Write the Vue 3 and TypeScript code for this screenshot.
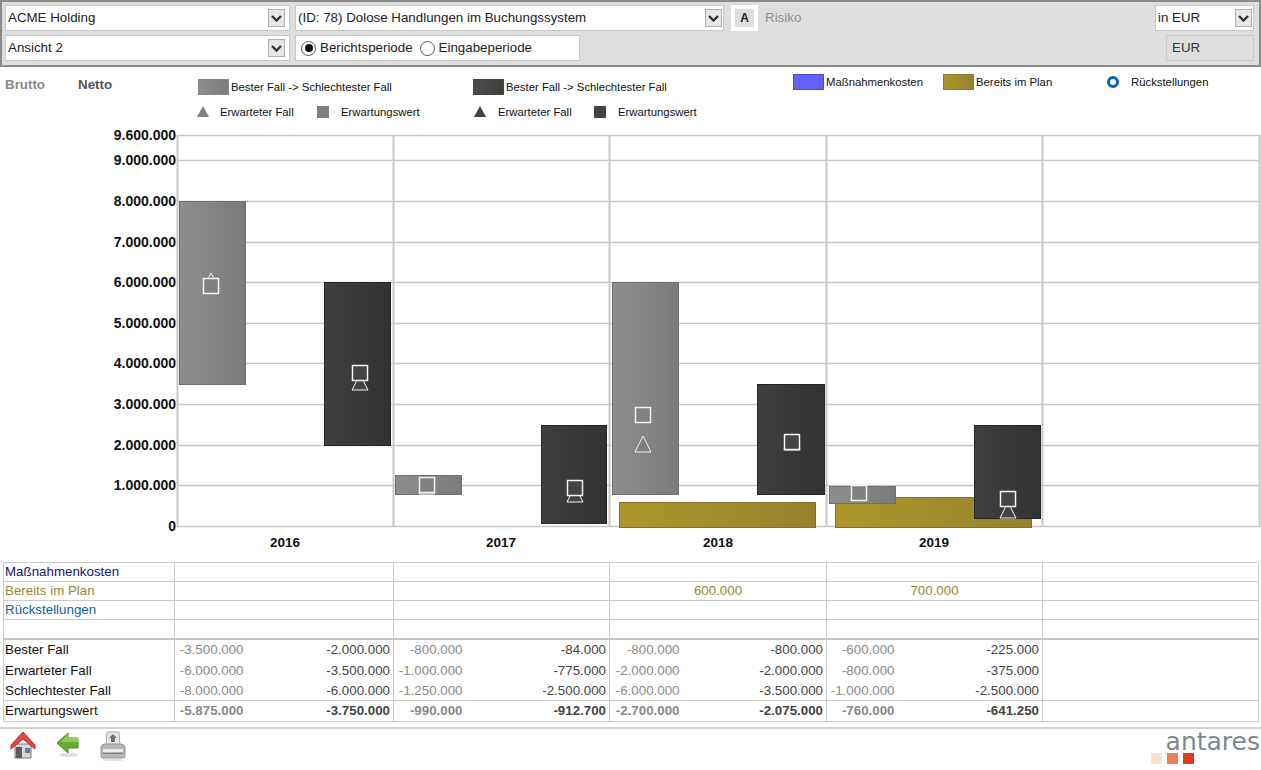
<script setup lang="ts">
interface Bar { x: number; y: number; w: number; h: number; kind: string }
interface Mark { x: number; y: number; dark: boolean }

const yTicks = [
  { v: '9.600.000', y: 135 }, { v: '9.000.000', y: 160 }, { v: '8.000.000', y: 201 },
  { v: '7.000.000', y: 242 }, { v: '6.000.000', y: 282 }, { v: '5.000.000', y: 323 },
  { v: '4.000.000', y: 363 }, { v: '3.000.000', y: 404 }, { v: '2.000.000', y: 445 },
  { v: '1.000.000', y: 485 }, { v: '0', y: 526 },
]
const xLines = [177, 393, 609, 826, 1042, 1259]
const years = [{ t: '2016', x: 285 }, { t: '2017', x: 501 }, { t: '2018', x: 718 }, { t: '2019', x: 934 }]

const bars: Bar[] = [
  { x: 619, y: 502, w: 197, h: 25, kind: 'gold' },
  { x: 835, y: 497, w: 197, h: 30, kind: 'gold' },
  { x: 179, y: 201, w: 67, h: 183, kind: 'gray' },
  { x: 324, y: 282, w: 67, h: 163, kind: 'dark' },
  { x: 395, y: 475, w: 67, h: 19, kind: 'gray' },
  { x: 541, y: 425, w: 66, h: 98, kind: 'dark' },
  { x: 612, y: 282, w: 67, h: 212, kind: 'gray' },
  { x: 757, y: 384, w: 68, h: 110, kind: 'dark' },
  { x: 829, y: 486, w: 67, h: 17, kind: 'gray' },
  { x: 974, y: 425, w: 67, h: 93, kind: 'dark' },
]
const triangles: Mark[] = [
  { x: 211, y: 273, dark: false }, { x: 360, y: 374, dark: true },
  { x: 427, y: 478, dark: false }, { x: 575, y: 486, dark: true },
  { x: 643, y: 436, dark: false }, { x: 792, y: 434, dark: true },
  { x: 859, y: 484, dark: false }, { x: 1008, y: 502, dark: true },
]
const squares: Mark[] = [
  { x: 211, y: 286, dark: false }, { x: 360, y: 373, dark: true },
  { x: 427, y: 485, dark: false }, { x: 575, y: 488, dark: true },
  { x: 643, y: 415, dark: false }, { x: 792, y: 442, dark: true },
  { x: 859, y: 493, dark: false }, { x: 1008, y: 499, dark: true },
]
const triPoints = (m: Mark) => `${m.x},${m.y} ${m.x + 8},${m.y + 16} ${m.x - 8},${m.y + 16}`

const topRows = [
  { label: 'Maßnahmenkosten', cls: 'navy', vals: ['', '', '', '', ''] },
  { label: 'Bereits im Plan', cls: 'olive', vals: ['', '', '600.000', '700.000', ''] },
  { label: 'Rückstellungen', cls: 'blue', vals: ['', '', '', '', ''] },
  { label: '', cls: '', vals: ['', '', '', '', ''] },
]
const rows = [
  { label: 'Bester Fall', vals: ['-3.500.000', '-2.000.000', '-800.000', '-84.000', '-800.000', '-800.000', '-600.000', '-225.000'] },
  { label: 'Erwarteter Fall', vals: ['-6.000.000', '-3.500.000', '-1.000.000', '-775.000', '-2.000.000', '-2.000.000', '-800.000', '-375.000'] },
  { label: 'Schlechtester Fall', vals: ['-8.000.000', '-6.000.000', '-1.250.000', '-2.500.000', '-6.000.000', '-3.500.000', '-1.000.000', '-2.500.000'] },
]
const totals = ['-5.875.000', '-3.750.000', '-990.000', '-912.700', '-2.700.000', '-2.075.000', '-760.000', '-641.250']
const cols = [171, 72, 147, 72, 144, 73, 144, 71, 145, 216]
</script>

<template>
  <div class="page">
    <header class="toolbar">
      <div class="tb-row">
        <div class="sel w285"><span>ACME Holding</span><i class="arrow"><svg width="11" height="7" viewBox="0 0 11 7"><path d="M1 1 L5.500 5.500 L10 1" fill="none" stroke="#333" stroke-width="2.400" /></svg></i></div>
        <div class="sel w429"><span>(ID: 78) Dolose Handlungen im Buchungssystem</span><i class="arrow"><svg width="11" height="7" viewBox="0 0 11 7"><path d="M1 1 L5.500 5.500 L10 1" fill="none" stroke="#333" stroke-width="2.400" /></svg></i></div>
        <div class="a-box">A</div>
        <div class="risk">Risiko</div>
        <div class="sel w99"><span>in EUR</span><i class="arrow"><svg width="11" height="7" viewBox="0 0 11 7"><path d="M1 1 L5.500 5.500 L10 1" fill="none" stroke="#333" stroke-width="2.400" /></svg></i></div>
      </div>
      <div class="tb-row second">
        <div class="sel w285"><span>Ansicht 2</span><i class="arrow"><svg width="11" height="7" viewBox="0 0 11 7"><path d="M1 1 L5.500 5.500 L10 1" fill="none" stroke="#333" stroke-width="2.400" /></svg></i></div>
        <div class="radios">
          <i class="radio on"></i><span>Berichtsperiode</span>
          <i class="radio"></i><span>Eingabeperiode</span>
        </div>
        <div class="cur">EUR</div>
      </div>
    </header>

    <section class="legend">
      <div class="tabs"><b class="brutto">Brutto</b><b class="netto">Netto</b></div>
      <div class="lg-block">
        <div class="lg-top"><i class="sw sw-gray"></i><span>Bester Fall -&gt; Schlechtester Fall</span></div>
        <div class="lg-bottom">
          <svg class="tri" width="12" height="11" viewBox="0 0 12 11"><path d="M6 0 L12 11 H0 Z" fill="#808080" /></svg><span class="t1">Erwarteter Fall</span>
          <i class="sq sq-gray"></i><span>Erwartungswert</span>
        </div>
      </div>
      <div class="lg-block second">
        <div class="lg-top"><i class="sw sw-dark"></i><span>Bester Fall -&gt; Schlechtester Fall</span></div>
        <div class="lg-bottom">
          <svg class="tri" width="12" height="11" viewBox="0 0 12 11"><path d="M6 0 L12 11 H0 Z" fill="#404040" /></svg><span class="t1">Erwarteter Fall</span>
          <i class="sq sq-dark"></i><span>Erwartungswert</span>
        </div>
      </div>
      <div class="lg-right">
        <i class="sw sw-blue"></i><span class="lt1">Maßnahmenkosten</span>
        <i class="sw sw-gold"></i><span class="lt2">Bereits im Plan</span>
        <i class="ring"></i><span>Rückstellungen</span>
      </div>
    </section>

    <svg class="chart" width="1261" height="437" viewBox="0 125 1261 437">
      <defs>
        <linearGradient id="g-gray"><stop offset="0" stop-color="#8e8e8e" /><stop offset="1" stop-color="#7b7b7b" /></linearGradient>
        <linearGradient id="g-dark"><stop offset="0" stop-color="#3f3f3f" /><stop offset="1" stop-color="#323232" /></linearGradient>
        <linearGradient id="g-gold"><stop offset="0" stop-color="#ae962c" /><stop offset="1" stop-color="#97812c" /></linearGradient>
      </defs>
      <line v-for="t in yTicks" :key="t.v" :x1="177" :x2="1259" :y1="t.y + 0.5" :y2="t.y + 0.5" class="grid h" />
      <line v-for="x in xLines" :key="x" :x1="x + 0.5" :x2="x + 0.5" y1="135" y2="527" class="grid v" />
      <text v-for="t in yTicks" :key="'l' + t.v" x="176" :y="t.y + 5" class="ylab">{{ t.v }}</text>
      <text v-for="y in years" :key="y.t" :x="y.x" y="547" class="year">{{ y.t }}</text>
      <rect v-for="(b, i) in bars" :key="i" :x="b.x + 0.5" :y="b.y + 0.5" :width="b.w - 1" :height="b.h" :class="['bar', b.kind]" :fill="`url(#g-${b.kind})`" />
      <polygon v-for="(m, i) in triangles" :key="'t' + i" :points="triPoints(m)" :fill="m.dark ? '#444' : '#808080'" class="marker thin" />
      <rect v-for="(m, i) in squares" :key="'s' + i" :x="m.x - 7.5" :y="m.y - 7.5" width="15" height="15" :fill="m.dark ? '#444' : '#808080'" class="marker" />
    </svg>

    <table class="data">
      <colgroup><col v-for="(w, i) in cols" :key="i" :style="{ width: w + 'px' }" /></colgroup>
      <tbody>
        <tr v-for="r in topRows" :key="r.label" class="top-row">
          <td :class="['label', r.cls]">{{ r.label }}</td>
          <td v-for="(v, i) in r.vals.slice(0, 4)" :key="i" colspan="2" class="center olive">{{ v }}</td>
          <td></td>
        </tr>
        <tr v-for="(r, ri) in rows" :key="r.label" :class="['val-row', 'r' + ri]">
          <td class="label">{{ r.label }}</td>
          <template v-for="(v, i) in r.vals" :key="i">
            <td :class="i % 2 ? 'right' : 'left'">{{ v }}</td>
          </template>
          <td></td>
        </tr>
        <tr class="total">
          <td class="label">Erwartungswert</td>
          <template v-for="(v, i) in totals" :key="i">
            <td :class="i % 2 ? 'right' : 'left'">{{ v }}</td>
          </template>
          <td></td>
        </tr>
      </tbody>
    </table>

    <footer class="foot">
      <div class="icons">
        <svg width="26" height="28" viewBox="0 0 26 28">
          <path d="M5 13 H21 V27 H5 Z" fill="#d8d8d8" stroke="#777" />
          <path d="M6 16 H12 V27 H6 Z" fill="#5c5c5c" />
          <path d="M15 17 H20 V22 H15 Z" fill="#5f7fa8" />
          <path d="M1 14 L13 1 L25 14 L25 18 L13 8 L1 18 Z" fill="#e2474b" stroke="#b62b2f" stroke-width="1" />
        </svg>
        <svg width="24" height="26" viewBox="0 0 24 26">
          <ellipse cx="13" cy="24" rx="9" ry="2" fill="#ddd" />
          <path d="M1 12 L12 2 V7 H22 V17 H12 V22 Z" fill="#68ad2e" stroke="#4f8e20" />
          <path d="M12 3 V7 H22 V11 H5 Z" fill="#93cc55" />
        </svg>
        <svg width="26" height="30" viewBox="0 0 26 30">
          <path d="M7 1 H19 L20 15 H6 Z" fill="#e4e6e8" stroke="#a8a8a8" />
          <path d="M13 3 L17 7 H15 V11 H11 V7 H9 Z" fill="#707070" />
          <path d="M1 17 Q1 13 5 13 H21 Q25 13 25 17 V25 Q25 27 23 27 H3 Q1 27 1 25 Z" fill="#b4b8bb" stroke="#94989c" />
          <path d="M3 18 H23 V21 H3 Z" fill="#ececec" />
          <path d="M3 22 H23 V23 H3 Z" fill="#777" />
          <ellipse cx="13" cy="29" rx="10" ry="1" fill="#ddd" />
        </svg>
      </div>
      <div class="logo">
        <div class="logo-text">antares</div>
        <div class="logo-sq"><i class="s1"></i><i class="s2"></i><i class="s3"></i></div>
      </div>
    </footer>
  </div>
</template>

<style scoped>
.page { width: 1261px; height: 770px; overflow: hidden; font-family: "Liberation Sans", Arial, sans-serif; color: #000; background: #fff; }
.toolbar { height: 67px; box-sizing: border-box; background: #dedede; border: 2px solid #8a8a8a; padding: 3px 5px 0 3px; }
.tb-row { display: flex; align-items: flex-start; height: 26px; }
.tb-row.second { margin-top: 4px; height: 26px; }
.sel { height: 26px; box-sizing: border-box; background: #fff; border: 1px solid #c9c9c9; display: flex; align-items: center; justify-content: space-between; padding: 0 1px 0 2px; font-size: 13.33px; color: #222; }
.sel span { position: relative; top: -1px; }
.w285 { width: 285px; margin-right: 5px; padding-right: 4px; }
.w429 { width: 429px; margin-right: 7px; }
.w99 { width: 99px; margin-left: auto; }
.arrow { width: 17px; height: 18px; box-sizing: border-box; border: 1px solid #b0b0b0; background: #e6e6e6; display: flex; align-items: center; justify-content: center; }
.a-box { width: 27px; height: 26px; box-sizing: border-box; border: 4px solid #fff; background: #dedede; font-size: 12px; font-weight: bold; display: flex; align-items: center; justify-content: center; color: #222; }
.risk { margin-left: 7px; line-height: 25px; font-size: 13.33px; color: #8f8f8f; }
.radios { width: 285px; height: 26px; box-sizing: border-box; background: #fff; border: 1px solid #c9c9c9; display: flex; align-items: center; padding-left: 5px; font-size: 13.33px; color: #222; }
.radios span { position: relative; top: -1px; }
.radio { width: 15px; height: 15px; box-sizing: border-box; border: 1px solid #555; border-radius: 50%; background: #fff; margin-right: 4px; position: relative; }
.radio + span { margin-right: 7px; }
.radio.on::after { content: ""; position: absolute; left: 2.500px; top: 2.500px; width: 8px; height: 8px; border-radius: 50%; background: #111; }
.cur { width: 88px; height: 26px; box-sizing: border-box; margin-left: auto; background: #dedede; border: 1px solid #c9c9c9; padding-left: 5px; line-height: 24px; font-size: 13.33px; color: #333; }

.legend { height: 58px; display: flex; font-size: 11.33px; color: #111; position: relative; }
.tabs { width: 198px; box-sizing: border-box; padding: 10px 0 0 5px; font-size: 13.33px; }
.brutto { color: #8a8a8a; display: inline-block; width: 73px; }
.netto { color: #555; }
.lg-block { width: 275px; padding-top: 11px; }
.lg-block.second { width: 320px; }
.lg-block.second .tri { margin-left: 1px; margin-right: 12px; }
.lg-block.second .t1 { width: 96px; }
.lg-top { display: flex; align-items: center; height: 17px; gap: 2px; }
.lg-bottom { display: flex; align-items: center; height: 15px; margin-top: 9px; }
.tri { margin-left: -1px; margin-right: 11px; }
.t1 { width: 97px; }
.sq { width: 12px; height: 12px; margin-right: 12px; }
.sq-gray { background: #808080; }
.sq-dark { background: #444; }
.sw { width: 31px; height: 16px; box-sizing: border-box; display: block; flex: none; }
.sw-gray { background: linear-gradient(90deg, #8e8e8e, #7b7b7b); border: 1px solid #888; }
.sw-dark { background: linear-gradient(90deg, #4c4c4c, #3e3e3e); border: 1px solid #444; }
.sw-blue { background: #6262f8; border: 1px solid #4a4ad8; }
.sw-gold { background: linear-gradient(90deg, #ae962c, #97812c); border: 1px solid #8d7a2a; }
.lg-right { display: flex; align-items: center; height: 17px; padding-top: 6px; gap: 2px; }
.lt1 { width: 115px; }
.lt2 { width: 129px; }
.ring { width: 12px; height: 12px; box-sizing: border-box; border: 3px solid #0b64ad; border-radius: 50%; margin-right: 10px; }

.chart { display: block; }
.grid { stroke: #c8c8c8; }
.grid.h { stroke-width: 1.4; }
.grid.v { stroke-width: 2; }
.ylab { font-size: 14px; font-weight: bold; text-anchor: end; fill: #111; }
.year { font-size: 13.5px; font-weight: bold; text-anchor: middle; fill: #111; }
.bar.gray { stroke: #6f6f6f; }
.bar.dark { stroke: #262626; }
.bar.gold { stroke: #85722a; }
.marker { stroke: #f2f2f2; stroke-width: 1.5; }
.marker.thin { stroke-width: 1; }

.data { margin-left: 3px; width: 1255px; table-layout: fixed; border-collapse: collapse; font-size: 13.33px; }
.data td { border: 1px solid #cbcbcb; padding: 0 3px; box-sizing: border-box; overflow: hidden; white-space: nowrap; }
.top-row td { height: 19px; line-height: 17px; vertical-align: top; }
.label { padding-left: 1px !important; color: #111; }
.navy { color: #14146e; }
.data .olive { color: #998534; }
.data .label.blue { color: #0a64ad; }
.center { text-align: center; }
.val-row td { height: 21px; line-height: 19px; border-top: none; border-bottom: none; }
.val-row.r0 td { border-top: 2px solid #c4c4c4; }
.val-row.r2 td { height: 20px; vertical-align: bottom; }
.left, .right { text-align: right; }
.data td.left { border-right: none; color: #8a8a8a; }
.data td.right { border-left: none; color: #444; }
.total td { height: 21px; line-height: 19px; font-weight: bold; vertical-align: top; }
.total .label { font-weight: normal; }

.foot { margin-top: 5px; border-top: 2px solid #d2d2d2; display: flex; justify-content: space-between; }
.icons { display: flex; align-items: flex-start; gap: 20px; padding: 2px 0 0 10px; }
.icons svg { filter: blur(0.4px); }
.logo { width: 110px; display: flex; flex-direction: column; padding-top: 1px; }
.logo-text { font-family: "DejaVu Sans", sans-serif; font-size: 25px; line-height: 23px; color: #7e888d; text-align: right; padding-right: 1px; }
.logo-sq { display: flex; gap: 5px; }
.logo-sq i { width: 11px; height: 11px; display: block; }
.s1 { background: #fde0d4; }
.s2 { background: #ec7f55; }
.s3 { background: #e33a1c; }
</style>
